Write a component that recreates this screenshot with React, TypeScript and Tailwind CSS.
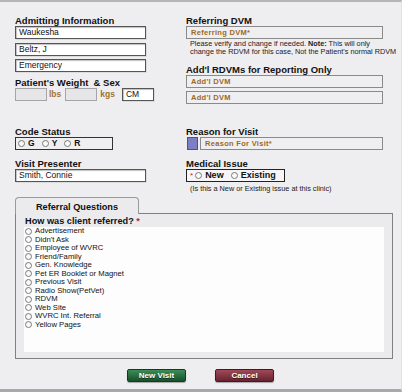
import React from "react";

const Label = ({ children, className = "" }: { children: React.ReactNode; className?: string }) => (
  <div className={`h-[11px] leading-[11px] text-[9.5px] font-bold text-[#111] whitespace-nowrap ${className}`}>{children}</div>
);

const WhiteInput = ({ value, className = "" }: { value: string; className?: string }) => (
  <div
    className={`h-[13px] bg-white border border-[#555] shadow-[inset_1px_1px_1px_rgba(0,0,0,0.25),1px_1px_0_rgba(0,0,0,0.08)] flex items-center px-[3px] text-[8.5px] text-[#111] whitespace-nowrap overflow-hidden ${className}`}
  >
    {value}
  </div>
);

const GrayInput = ({ value, className = "" }: { value: string; className?: string }) => (
  <div
    className={`h-[13px] bg-[#efeff1] border border-[#8a8a8a] flex items-center px-[4px] text-[7.5px] font-bold tracking-[0.3px] text-[#9b6a28] whitespace-nowrap overflow-hidden ${className}`}
  >
    {value}
  </div>
);

const Circle = ({ className = "" }: { className?: string }) => (
  <span
    className={`inline-block w-[7px] h-[7px] rounded-full border border-[#7a7a7a] bg-gradient-to-b from-[#f4f4f4] to-white shrink-0 ${className}`}
  />
);

const referralOptions = [
  "Advertisement",
  "Didn't Ask",
  "Employee of WVRC",
  "Friend/Family",
  "Gen. Knowledge",
  "Pet ER Booklet or Magnet",
  "Previous Visit",
  "Radio Show(PetVet)",
  "RDVM",
  "Web Site",
  "WVRC Int. Referral",
  "Yellow Pages",
];

export default function App() {
  return (
    <div className="w-[402px] h-[392px] bg-[#eeedf0] border-t-2 border-t-[#b5b5b5] border-b-[3px] border-b-[#a9a9a9] border-r border-r-[#e2e2e4] flex flex-col overflow-hidden font-['Liberation_Sans',Arial,sans-serif] text-[#111]">
      <div className="pl-[15px] pt-[13px] flex flex-col">
        {/* Top section */}
        <div className="flex">
          <div className="w-[141px] flex flex-col">
            <Label>Admitting Information</Label>
            <WhiteInput value="Waukesha" className="w-[131px]" />
            <WhiteInput value="Beltz, J" className="w-[131px] mt-[4px]" />
            <WhiteInput value="Emergency" className="w-[131px] mt-[3px]" />
            <Label className="mt-[5px]">Patient's Weight &nbsp;&amp; Sex</Label>
            <div className="flex items-center h-[13px]">
              <div className="w-[32px] h-[13px] bg-[#e6e6e9] border border-[#a5a5a8]" />
              <span className="ml-[2px] text-[8.5px] font-bold text-[#a3742f]">lbs</span>
              <div className="ml-[4px] w-[32px] h-[13px] bg-[#e6e6e9] border border-[#a5a5a8]" />
              <span className="ml-[3px] text-[8.5px] font-bold text-[#a3742f]">kgs</span>
              <WhiteInput value="CM" className="ml-[7px] w-[32px]" />
            </div>
          </div>
          <div className="ml-[30px] w-[197px] flex flex-col">
            <Label>Referring DVM</Label>
            <GrayInput value="Referring DVM*" className="w-[197px]" />
            <div className="pl-[4px] mt-[1px] text-[7.3px] leading-[8px] text-[#222] whitespace-nowrap">
              Please verify and change if needed. <b>Note:</b> This will only
              <br />
              change the RDVM for this case, Not the Patient's normal RDVM
            </div>
            <Label className="mt-[8px]">Add'l RDVMs for Reporting Only</Label>
            <GrayInput value="Add'l DVM" className="w-[197px]" />
            <GrayInput value="Add'l DVM" className="w-[197px] mt-[3px]" />
          </div>
        </div>

        {/* Middle section */}
        <div className="flex mt-[22px]">
          <div className="w-[141px] flex flex-col">
            <Label>Code Status</Label>
            <div className="w-[98px] h-[13px] border border-[#333] bg-[#efeff1] flex items-center pl-[2px] text-[8.5px] font-bold">
              <Circle />
              <span className="ml-[3px]">G</span>
              <Circle className="ml-[7px]" />
              <span className="ml-[3px]">Y</span>
              <Circle className="ml-[7px]" />
              <span className="ml-[3px]">R</span>
            </div>
            <Label className="mt-[8px]">Visit Presenter</Label>
            <WhiteInput value="Smith, Connie" className="w-[131px]" />
          </div>
          <div className="ml-[30px] w-[197px] flex flex-col">
            <Label>Reason for Visit</Label>
            <div className="flex">
              <div className="ml-[1px] w-[11px] h-[13px] bg-[#7c7fc4] border border-[#50527a]" />
              <GrayInput value="Reason For Visit*" className="ml-[2px] w-[183px]" />
            </div>
            <Label className="mt-[8px]">Medical Issue</Label>
            <div className="w-[99px] h-[13px] border border-[#222] bg-[#f6f6f8] flex items-center pl-[3px] text-[9px] font-bold">
              <span className="text-[#c0262d] text-[8px] font-normal">*</span>
              <Circle className="ml-[2px]" />
              <span className="ml-[3px]">New</span>
              <Circle className="ml-[7px]" />
              <span className="ml-[3px]">Existing</span>
            </div>
            <div className="pl-[4px] mt-[3px] text-[7.3px] leading-[8px] text-[#222] whitespace-nowrap">
              (Is this a New or Existing issue at this clinic)
            </div>
          </div>
        </div>

        {/* Referral panel */}
        <div className="mt-[4px] flex flex-col">
          <div className="relative z-10 -mb-[1px] w-[124px] h-[17px] border border-b-0 border-[#9a9a9a] rounded-t-[4px] bg-[#ebebee] text-center">
            <div className="pt-[4px] leading-[11px] text-[9.2px] font-bold">Referral Questions</div>
          </div>
          <div className="w-[378px] h-[146px] border border-[#808080] bg-[#ebebee] flex flex-col pl-[8px] pr-[8px] pt-[2px] pb-[6px]">
            <div className="pl-[1px] h-[11px] leading-[11px] text-[9.2px] font-bold whitespace-nowrap">
              How was client referred? <span className="text-[#c0262d]">*</span>
            </div>
            <div className="flex-1 bg-[#fdfdfd] flex flex-col">
              {referralOptions.map((o) => (
                <div key={o} className="h-[8.5px] flex items-center pl-[1px] text-[7.7px] leading-[8.5px] text-[#111] whitespace-nowrap">
                  <Circle />
                  <span className="ml-[3px]">{o}</span>
                </div>
              ))}
            </div>
          </div>
        </div>

        {/* Buttons */}
        <div className="flex mt-[10px] ml-[112px]">
          <div className="w-[59px] h-[13px] rounded-[2px] border border-[#0f3d20] bg-gradient-to-b from-[#3d8d58] to-[#17512b] shadow-[0_1px_1px_rgba(0,0,0,0.3)] flex items-center justify-center text-white text-[8px] font-bold [text-shadow:0_1px_0_rgba(0,0,0,0.5)]">
            New Visit
          </div>
          <div className="ml-[29px] w-[59px] h-[13px] rounded-[2px] border border-[#4a1620] bg-gradient-to-b from-[#a04a57] to-[#6a2230] shadow-[0_1px_1px_rgba(0,0,0,0.3)] flex items-center justify-center text-white text-[8px] font-bold [text-shadow:0_1px_0_rgba(0,0,0,0.5)]">
            Cancel
          </div>
        </div>
      </div>
    </div>
  );
}
